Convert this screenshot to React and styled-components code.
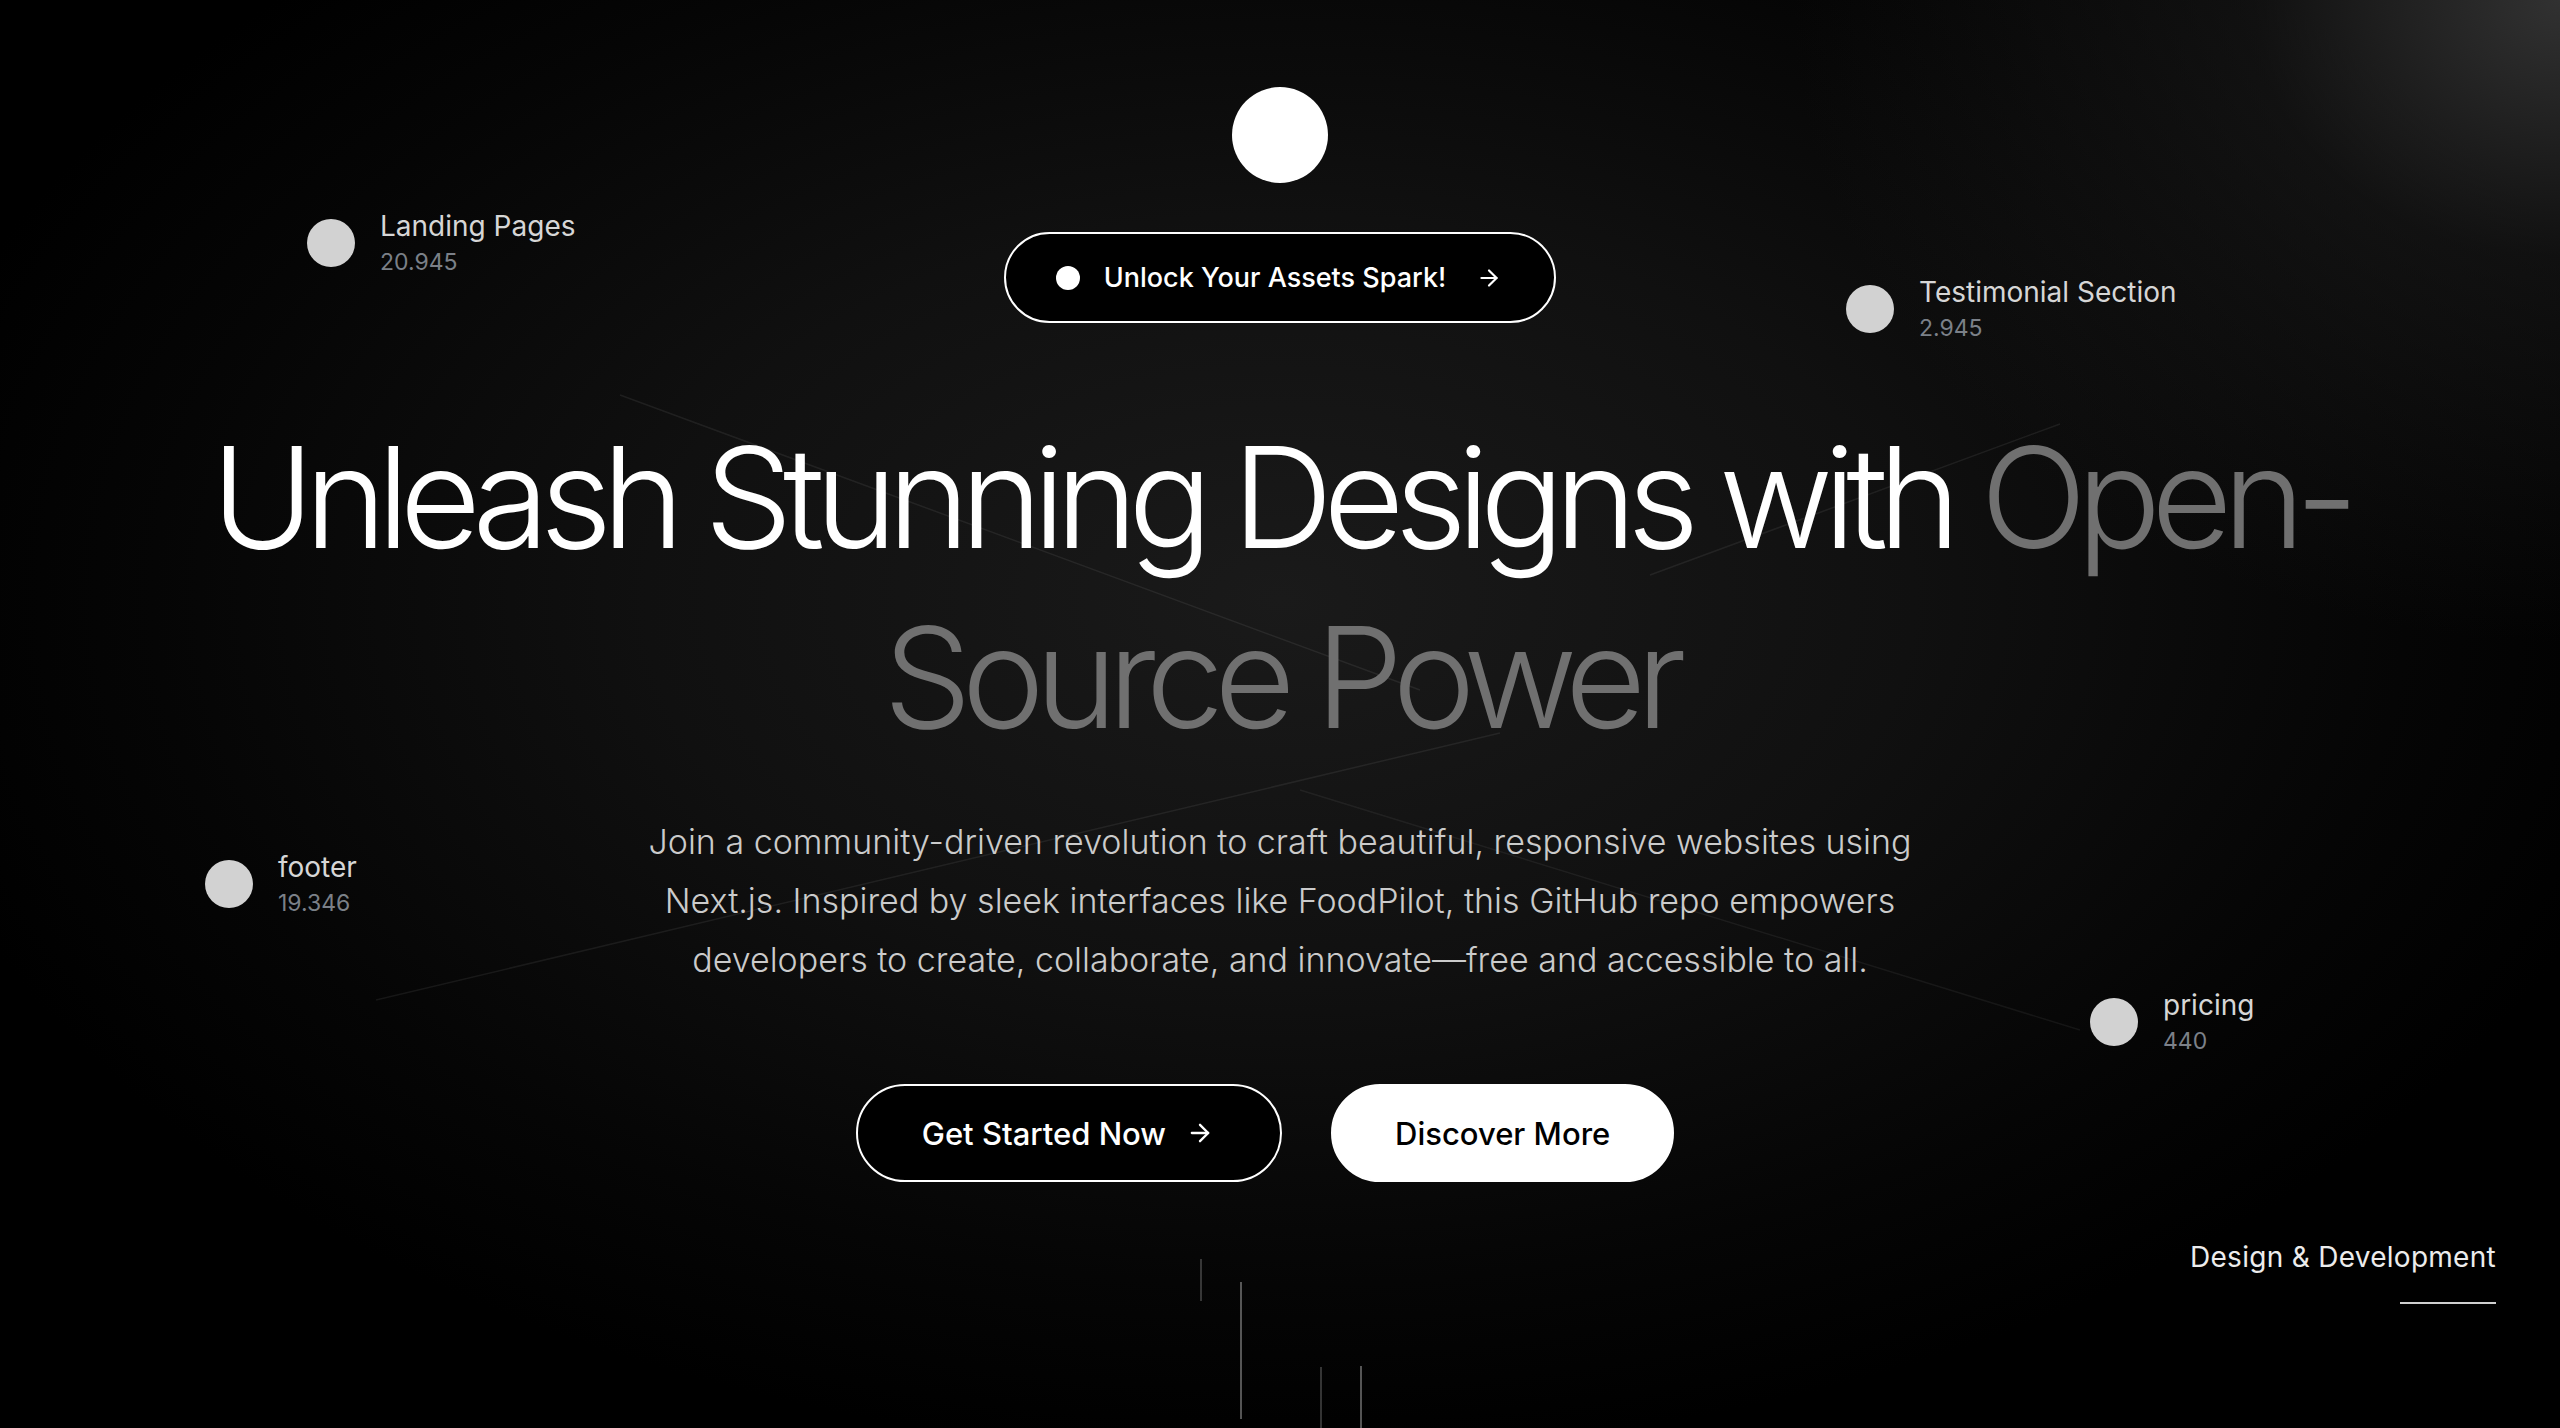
import React from "react";
import styled, { createGlobalStyle } from "styled-components";
import { ArrowRight } from "lucide-react";

let GlobalStyle = createGlobalStyle`
  html,
  body {
    margin: 0;
    padding: 0;
    background: #000;
  }

  * {
    box-sizing: border-box;
  }
`;

let Hero = styled.section`
  position: relative;
  width: 100%;
  height: 1428px;
  overflow: hidden;
  font-family: "Inter", "Liberation Sans", sans-serif;
  color: #fff;
  background:
    radial-gradient(ellipse 30% 45% at 100% 0%, rgba(58, 58, 58, 0.85) 0%, rgba(36, 36, 36, 0.45) 40%, rgba(0, 0, 0, 0) 100%),
    radial-gradient(ellipse 55% 60% at 50% 42%, #1a1a1a 0%, #101010 45%, #050505 80%, #000 100%);
`;

let Rays = styled.svg`
  position: absolute;
  inset: 0;
  width: 100%;
  height: 100%;
  pointer-events: none;
`;

let Column = styled.div`
  position: relative;
  display: flex;
  flex-direction: column;
  align-items: center;
  padding-top: 87px;
`;

let Orb = styled.div`
  width: 96px;
  height: 96px;
  border-radius: 50%;
  background: #fff;
`;

let Badge = styled.a`
  display: flex;
  align-items: center;
  height: 91px;
  margin-top: 49px;
  padding: 0 52px 0 50px;
  border: 2px solid #fff;
  border-radius: 999px;
  background: #000;
  color: #fff;
  font-size: 27px;
  font-weight: 500;
  text-decoration: none;

  svg {
    margin-left: 30px;
  }
`;

let Dot = styled.span`
  width: 24px;
  height: 24px;
  margin-right: 24px;
  border-radius: 50%;
  background: #fff;
`;

let Title = styled.h1`
  margin: 84px 0 0;
  font-size: 140px;
  font-weight: 300;
  line-height: 180px;
  letter-spacing: -0.07em;
  text-align: center;
`;

let Muted = styled.span`
  color: #707070;
`;

let Lead = styled.p`
  width: 1300px;
  margin: 45px 0 0;
  font-size: 34px;
  font-weight: 300;
  line-height: 59px;
  color: #cbcbcb;
  text-align: center;
`;

let Actions = styled.div`
  display: flex;
  gap: 49px;
  margin: 95px 30px 0 0;
`;

let Button = styled.a`
  display: flex;
  align-items: center;
  gap: 20px;
  height: 98px;
  padding: 0 ${p => (p.$light ? "62px" : "66px")} 0 ${p => (p.$light ? "62px" : "64px")};
  border: 2px solid #fff;
  border-radius: 999px;
  background: ${p => (p.$light ? "#fff" : "#000")};
  color: ${p => (p.$light ? "#000" : "#fff")};
  font-size: 31px;
  font-weight: 500;
  text-decoration: none;
`;

let Tag = styled.div`
  position: absolute;
  left: ${p => p.$x}px;
  top: ${p => p.$y}px;
  display: flex;
  align-items: center;
  gap: 25px;
`;

let TagDot = styled.span`
  width: 48px;
  height: 48px;
  border-radius: 50%;
  background: #d2d2d2;
`;

let TagText = styled.div`
  display: flex;
  flex-direction: column;
`;

let TagLabel = styled.span`
  font-size: 28px;
  line-height: 38px;
  color: #d6d6d6;
`;

let TagCount = styled.span`
  font-size: 23px;
  line-height: 34px;
  color: #7b8088;
`;

let Corner = styled.div`
  position: absolute;
  right: 64px;
  top: 1240px;
  display: flex;
  flex-direction: column;
  align-items: flex-end;
  gap: 28px;
  font-size: 28px;
  letter-spacing: 0.01em;
  color: #ececec;

  &::after {
    content: "";
    width: 96px;
    height: 2px;
    background: #cfcfcf;
  }
`;

let tags = [
  { label: "Landing Pages", count: "20.945", x: 307, y: 207 },
  { label: "Testimonial Section", count: "2.945", x: 1846, y: 273 },
  { label: "footer", count: "19.346", x: 205, y: 848 },
  { label: "pricing", count: "440", x: 2090, y: 986 }
];

let rays = [
  [620, 395, 1420, 690, 0.07],
  [376, 1000, 1500, 733, 0.07],
  [1300, 790, 2080, 1030, 0.06],
  [1650, 575, 2060, 424, 0.07],
  [1201, 1259, 1201, 1301, 0.2],
  [1241, 1282, 1241, 1419, 0.33],
  [1321, 1367, 1321, 1428, 0.2],
  [1361, 1366, 1361, 1428, 0.33]
];

function App() {
  return (
    <Hero>
      <GlobalStyle />
      <Rays viewBox="0 0 2560 1428" preserveAspectRatio="none">
        {rays.map(([x1, y1, x2, y2, o], i) => (
          <line
            key={i}
            x1={x1}
            y1={y1}
            x2={x2}
            y2={y2}
            stroke="#fff"
            strokeOpacity={o}
            strokeWidth={i > 3 ? 2 : 1.5}
          />
        ))}
      </Rays>

      {tags.map(tag => (
        <Tag key={tag.label} $x={tag.x} $y={tag.y}>
          <TagDot />
          <TagText>
            <TagLabel>{tag.label}</TagLabel>
            <TagCount>{tag.count}</TagCount>
          </TagText>
        </Tag>
      ))}

      <Column>
        <Orb />
        <Badge href="#">
          <Dot />
          Unlock Your Assets Spark!
          <ArrowRight size={26} strokeWidth={2} />
        </Badge>
        <Title>
          Unleash Stunning Designs with <Muted>Open-</Muted>
          <br />
          <Muted>Source Power</Muted>
        </Title>
        <Lead>
          Join a community-driven revolution to craft beautiful, responsive websites using
          Next.js. Inspired by sleek interfaces like FoodPilot, this GitHub repo empowers
          developers to create, collaborate, and innovate—free and accessible to all.
        </Lead>
        <Actions>
          <Button href="#">
            Get Started Now
            <ArrowRight size={28} strokeWidth={2} />
          </Button>
          <Button href="#" $light>
            Discover More
          </Button>
        </Actions>
      </Column>

      <Corner>Design &amp; Development</Corner>
    </Hero>
  );
}

export default App;
